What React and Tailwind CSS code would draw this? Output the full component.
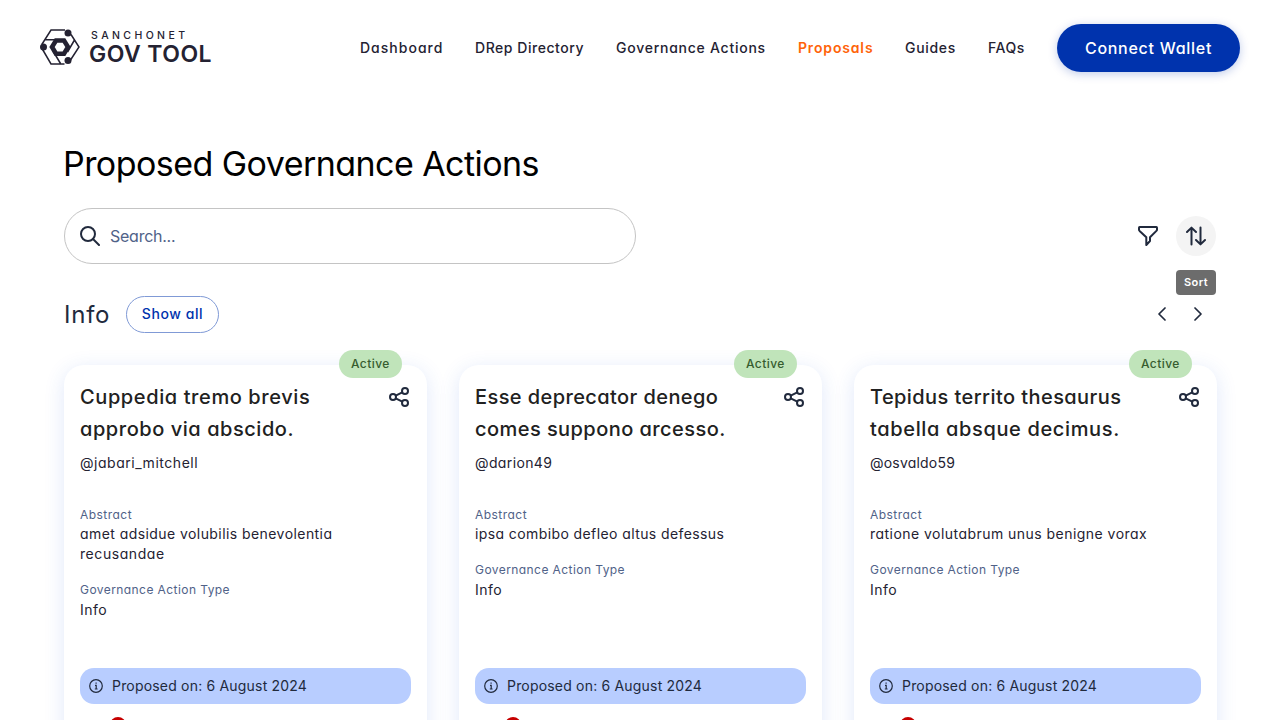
const NAV = [
  { label: "Dashboard", cls: "w-[83px] tracking-[1.02px] font-medium" },
  { label: "DRep Directory", cls: "w-[109px] tracking-[0.54px] font-medium" },
  { label: "Governance Actions", cls: "w-[150px] tracking-[0.75px] font-medium" },
  { label: "Proposals", cls: "w-[75px] tracking-[0.84px] font-semibold text-[#ff640a]" },
  { label: "Guides", cls: "w-[51px] tracking-[0.69px] font-medium" },
  { label: "FAQs", cls: "w-[37px] tracking-[0.57px] font-medium" },
];

const CARDS = [
  {
    title: [
      { text: "Cuppedia tremo brevis", cls: "tracking-[0.6px]" },
      { text: "approbo via abscido.", cls: "tracking-[0.55px]" },
    ],
    user: "@jabari_mitchell",
    userCls: "tracking-[0.53px]",
    abstract: [
      { text: "amet adsidue volubilis benevolentia", cls: "tracking-[0.43px]" },
      { text: "recusandae", cls: "tracking-[0.56px]" },
    ],
  },
  {
    title: [
      { text: "Esse deprecator denego", cls: "tracking-[0.41px]" },
      { text: "comes suppono arcesso.", cls: "tracking-[0.44px]" },
    ],
    user: "@darion49",
    userCls: "tracking-[0.38px]",
    abstract: [{ text: "ipsa combibo defleo altus defessus", cls: "tracking-[0.4px]" }],
  },
  {
    title: [
      { text: "Tepidus territo thesaurus", cls: "tracking-[0.42px]" },
      { text: "tabella absque decimus.", cls: "tracking-[0.64px]" },
    ],
    user: "@osvaldo59",
    userCls: "tracking-[0.2px]",
    abstract: [{ text: "ratione volutabrum unus benigne vorax", cls: "tracking-[0.46px]" }],
  },
];

function Logo() {
  return (
    <div className="-mt-[2px] flex items-center">
      <svg width="40" height="36" viewBox="0 0 40 36" fill="none" stroke="#242232" strokeWidth="1.5">
        <path d="M25 1H11L1.8 15.5M4.5 10.8H15.5M2.6 20.5L11 35H24.5M13 22L20.5 34.5M31 5.5L39 18L30.5 31M34.5 11L27.5 23" />
        <circle cx="28" cy="4" r="3.5" fill="#242232" stroke="none" />
        <circle cx="3.5" cy="18" r="3.5" fill="#242232" stroke="none" />
        <circle cx="28" cy="31.5" r="3.5" fill="#242232" stroke="none" />
        <path d="M16 11.5H24L28 18L24 24.7H16L12 18Z" strokeWidth="4.6" fill="none" />
      </svg>
      <div className="ml-[9px] flex flex-col text-[#242232]">
        <span className="pl-[2px] text-[10.5px] font-medium leading-[13px] tracking-[3.4px] whitespace-nowrap">SANCHONET</span>
        <span className="text-[23px] font-semibold leading-[24px] tracking-[0.45px] whitespace-nowrap">GOV TOOL</span>
      </div>
    </div>
  );
}

function ShareIcon() {
  return (
    <svg className="mt-[5px] shrink-0" width="22" height="22" viewBox="0 0 22 22" fill="none" stroke="#212a3d" strokeWidth="2">
      <circle cx="4" cy="11" r="3" />
      <circle cx="16" cy="5" r="3" />
      <circle cx="16" cy="17" r="3" />
      <path d="M6.7 9.7L13.3 6.4M6.7 12.3L13.3 15.6" />
    </svg>
  );
}

function Card({ card }) {
  return (
    <article className="relative flex h-[440px] w-[363px] shrink-0 flex-col rounded-[20px] bg-white px-4 pt-4 shadow-[0_4px_20px_rgba(47,98,220,0.15)]">
      <span className="absolute -top-[15px] right-[25px] flex h-7 w-[63px] items-center whitespace-nowrap rounded-full bg-[#c0e4ba] pl-3 text-xs font-medium tracking-[0.45px] text-[#365c2f]">
        Active
      </span>
      <div className="flex justify-between">
        <h3 className="text-xl font-medium leading-8 text-[#212121]">
          {card.title.map((l) => (
            <span key={l.text} className={`block whitespace-nowrap ${l.cls}`}>{l.text}</span>
          ))}
        </h3>
        <ShareIcon />
      </div>
      <p className={`mt-2 text-sm leading-5 ${card.userCls}`}>{card.user}</p>
      <div className="mt-8 h-[163px]">
        <p className="text-xs leading-[19px] tracking-[0.46px] text-[#506288]">Abstract</p>
        <div className="text-sm leading-5">
          {card.abstract.map((l) => (
            <span key={l.text} className={`block whitespace-nowrap ${l.cls}`}>{l.text}</span>
          ))}
        </div>
        <p className="mt-4 text-xs leading-5 tracking-[0.43px] text-[#506288]">Governance Action Type</p>
        <p className="text-sm leading-5 tracking-[0.45px]">Info</p>
      </div>
      <div className="flex h-9 shrink-0 items-center rounded-[14px] bg-[#b8cdff] pl-2">
        <svg width="16" height="16" viewBox="0 0 16 16" fill="none" stroke="#212a3d" strokeWidth="1.2">
          <circle cx="8" cy="8" r="6.3" />
          <path d="M7 7.3H8.2V11M6.8 11H9.6M7.5 5.1H8.7" />
        </svg>
        <span className="ml-2 text-sm tracking-[0.19px] text-[#212a3d]">Proposed on: 6 August 2024</span>
      </div>
      <div className="mt-[13px] flex pl-[30px]">
        <span className="size-4 rounded-full bg-[#c60000]" />
      </div>
    </article>
  );
}

export default function App() {
  return (
    <div className="h-screen overflow-hidden bg-white font-['Inter','Noto_Sans',sans-serif] text-[#242232] [font-feature-settings:'cv11']">
      <header className="flex h-24 items-center justify-between px-10">
        <Logo />
        <nav className="flex items-center gap-8">
          {NAV.map((n) => (
            <a key={n.label} className={`whitespace-nowrap text-sm ${n.cls}`}>{n.label}</a>
          ))}
          <button className="h-12 w-[183px] whitespace-nowrap rounded-full bg-[#0033ad] text-base font-medium tracking-[0.72px] text-white shadow-[0_2px_10px_rgba(0,51,173,0.25)]">
            Connect Wallet
          </button>
        </nav>
      </header>
      <main className="px-16">
        <h1 className="-ml-px mt-11 whitespace-nowrap text-[34px] leading-[48px] tracking-[-0.55px] text-black">Proposed Governance Actions</h1>
        <div className="mt-5 flex h-14 items-center justify-between">
          <div className="flex h-14 w-[572px] items-center rounded-full border border-[#c4c4c4] pl-[15px]">
            <svg width="20" height="20" viewBox="0 0 20 20" fill="none" stroke="#212a3d" strokeWidth="2" strokeLinecap="round">
              <circle cx="8" cy="8" r="7" />
              <path d="M13 13L19 19" />
            </svg>
            <span className="ml-[10px] text-base tracking-[-0.25px] text-[#506288]">Search...</span>
          </div>
          <div className="flex items-center gap-[18px]">
            <svg width="20" height="20" viewBox="0 0 20 20" fill="none" stroke="#212a3d" strokeWidth="2" strokeLinejoin="round">
              <path d="M1.6 1H18.4Q19 1 19 1.7V3.7Q19 4.3 18.4 4.9L12 11.2V15L8.3 19V11.2L1.6 4.9Q1 4.3 1 3.7V1.7Q1 1 1.6 1Z" />
            </svg>
            <div className="relative flex size-10 items-center justify-center rounded-full bg-[#f4f4f4]">
              <svg width="20" height="20" viewBox="0 0 20 20" fill="none" stroke="#212a3d" strokeWidth="2" strokeLinecap="round" strokeLinejoin="round">
                <path d="M5.5 18.5V2M1 6L5.5 1.6L10 6M14.5 1.5V18M10 14L14.5 18.4L19 14" />
              </svg>
              <span className="absolute left-0 top-[54px] flex h-[25px] w-10 items-center justify-center rounded-[4px] bg-[#6c6c6c] text-[11px] font-semibold tracking-[0.42px] text-white">
                Sort
              </span>
            </div>
          </div>
        </div>
        <div className="mt-8 flex h-[37px] items-center">
          <h2 className="w-[46px] text-2xl tracking-[0.75px] text-[#212a3d]">Info</h2>
          <button className="ml-4 h-[37px] w-[93px] whitespace-nowrap rounded-full border border-[#809ad6] pb-px text-sm font-medium tracking-[0.58px] text-[#0033ad]">
            Show all
          </button>
          <div className="ml-auto mr-[14px] flex gap-7 pb-px">
            <svg width="8" height="14" viewBox="0 0 8 14" fill="none" stroke="#212a3d" strokeWidth="1.7" strokeLinecap="round" strokeLinejoin="round">
              <path d="M7 1L1 7L7 13" />
            </svg>
            <svg width="8" height="14" viewBox="0 0 8 14" fill="none" stroke="#212a3d" strokeWidth="1.7" strokeLinecap="round" strokeLinejoin="round">
              <path d="M1 1L7 7L1 13" />
            </svg>
          </div>
        </div>
        <section className="mt-8 flex gap-8">
          {CARDS.map((c) => (
            <Card key={c.user} card={c} />
          ))}
        </section>
      </main>
    </div>
  );
}
